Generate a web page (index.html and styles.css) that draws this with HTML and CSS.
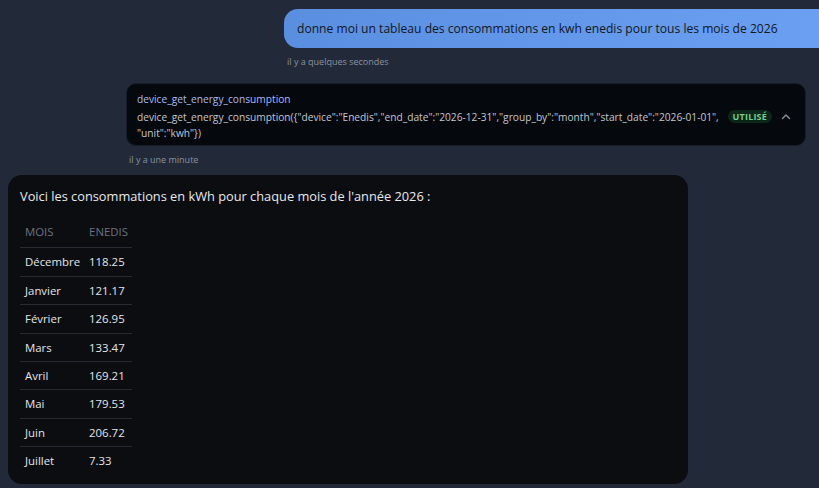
FILE: index.html
```html
<!DOCTYPE html>
<html lang="fr">
<head>
<meta charset="utf-8">
<link rel="stylesheet" href="styles.css">
</head>
<body>
<div class="chat">
  <div class="user-group">
    <div class="user-bubble">donne moi un tableau des consommations en kwh enedis pour tous les mois de 2026</div>
    <div class="stamp">il y a quelques secondes</div>
  </div>
  <div class="tool-group">
    <div class="tool-card">
      <div class="tool-body">
        <div class="tool-name">device_get_energy_consumption</div>
        <div class="tool-call"><span class="line">device_get_energy_consumption({"device":"Enedis","end_date":"2026-12-31","group_by":"month","start_date":"2026-01-01",</span><span class="line">"unit":"kwh"})</span></div>
      </div>
      <span class="badge">UTILISÉ</span>
      <svg class="chev" width="12" height="12" viewBox="0 0 12 12"><path d="M2.5 7.5 L6 4 L9.5 7.5" fill="none" stroke="#8b93a3" stroke-width="1.4" stroke-linecap="round" stroke-linejoin="round"/></svg>
    </div>
    <div class="stamp">il y a une minute</div>
  </div>
  <div class="assistant-bubble">
    <p class="intro">Voici les consommations en kWh pour chaque mois de l'année 2026 :</p>
    <table class="data">
      <thead><tr><th>MOIS</th><th>ENEDIS</th></tr></thead>
      <tbody>
        <tr><td>Décembre</td><td>118.25</td></tr>
        <tr><td>Janvier</td><td>121.17</td></tr>
        <tr><td>Février</td><td>126.95</td></tr>
        <tr><td>Mars</td><td>133.47</td></tr>
        <tr><td>Avril</td><td>169.21</td></tr>
        <tr><td>Mai</td><td>179.53</td></tr>
        <tr><td>Juin</td><td>206.72</td></tr>
        <tr><td>Juillet</td><td>7.33</td></tr>
      </tbody>
    </table>
  </div>
</div>
</body>
</html>
```
FILE: styles.css
```css
html, body {
  margin: 0;
  padding: 0;
  background: #222a39;
  overflow: hidden;
}
body {
  font-family: "Open Sans", "Noto Sans", sans-serif;
  color: #e6e7ea;
}
.chat {
  display: flex;
  flex-direction: column;
  padding: 9px 13px 0 8px;
}
.user-group {
  display: flex;
  flex-direction: column;
  align-items: flex-start;
  margin-left: 276px;
  margin-right: -13px;
}
.user-bubble {
  background: linear-gradient(90deg, #5a8fe0, #6a9ff2);
  color: #111722;
  font-size: 12.1px;
  line-height: 19px;
  padding: 10px 13px;
  border-radius: 14px 0 0 14px;
  white-space: nowrap;
  overflow: hidden;
  width: 100%;
  box-sizing: border-box;
}
.stamp {
  font-size: 9px;
  line-height: 14px;
  color: #8a92a0;
  margin: 7px 0 0 3px;
}
.tool-group {
  display: flex;
  flex-direction: column;
  align-self: flex-end;
  width: 680px;
  margin-top: 14px;
}
.tool-card {
  display: flex;
  align-items: center;
  background: #05080d;
  border: 1px solid #161d29;
  border-radius: 10px;
  padding: 8px 10px 4px;
}
.tool-body {
  flex: 1;
  min-width: 0;
}
.tool-name {
  font-size: 10.2px;
  line-height: 15px;
  color: #a9bcf5;
  margin-bottom: 2px;
}
.tool-call {
  font-size: 10.2px;
  line-height: 16px;
  color: #c3c7ce;
}
.line {
  display: block;
  white-space: nowrap;
}
.badge {
  flex: none;
  font-size: 9px;
  font-weight: 700;
  letter-spacing: 0.2px;
  color: #72cf91;
  background: #0c2618;
  border-radius: 7px;
  padding: 0 5px;
  line-height: 13px;
  margin: 0 8px 0 10px;
}
.chev {
  flex: none;
  margin-right: 3px;
}
.assistant-bubble {
  align-self: flex-start;
  width: 680px;
  box-sizing: border-box;
  margin-top: 8px;
  background: #0b0d11;
  border-radius: 14px;
  padding: 11px 12px 9px;
}
.intro {
  margin: 0 0 12px;
  font-size: 12.8px;
  line-height: 20px;
  color: #e8e9ec;
}
.data {
  border-collapse: collapse;
  font-size: 11.4px;
}
.data th {
  text-align: left;
  font-weight: 400;
  color: #6b7280;
  padding: 6px 4px 8px 5px;
  line-height: 15.4px;
  border-bottom: 1px solid #262b33;
}
.data td {
  padding: 6px 4px 6px 5px;
  line-height: 15.4px;
  color: #e3e5e8;
  border-bottom: 1px solid #262b33;
}
.data tr:last-child td {
  border-bottom: none;
}
```
